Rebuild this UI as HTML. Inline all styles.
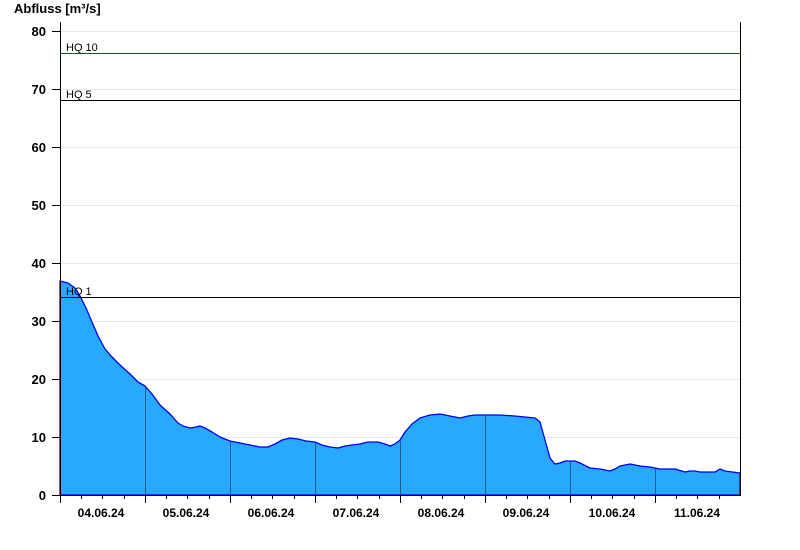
<!DOCTYPE html>
<html><head><meta charset="utf-8"><style>
html,body{margin:0;padding:0;background:#fff;width:800px;height:550px;overflow:hidden}
svg{display:block}
text{font-family:"Liberation Sans",Arial,sans-serif}
</style></head><body>
<svg width="800" height="550" viewBox="0 0 800 550" xmlns="http://www.w3.org/2000/svg">
<text x="14" y="13" font-size="13" font-weight="bold" fill="#000">Abfluss [m³/s]</text>
<g stroke="#e8e8e8" stroke-width="1">
<line x1="60" y1="31.5" x2="740" y2="31.5"/>
<line x1="60" y1="89.5" x2="740" y2="89.5"/>
<line x1="60" y1="147.5" x2="740" y2="147.5"/>
<line x1="60" y1="205.5" x2="740" y2="205.5"/>
<line x1="60" y1="263.5" x2="740" y2="263.5"/>
<line x1="60" y1="321.5" x2="740" y2="321.5"/>
<line x1="60" y1="379.5" x2="740" y2="379.5"/>
<line x1="60" y1="437.5" x2="740" y2="437.5"/>
</g>
<g font-size="13" font-weight="bold" text-anchor="end" fill="#000">
<text x="46" y="36">80</text><text x="46" y="94">70</text><text x="46" y="152">60</text>
<text x="46" y="210">50</text><text x="46" y="268">40</text><text x="46" y="326">30</text>
<text x="46" y="384">20</text><text x="46" y="442">10</text><text x="46" y="500">0</text>
</g>
<g stroke="#000"><line x1="52" y1="31.5" x2="60" y2="31.5"/><line x1="52" y1="89.5" x2="60" y2="89.5"/><line x1="52" y1="147.5" x2="60" y2="147.5"/><line x1="52" y1="205.5" x2="60" y2="205.5"/><line x1="52" y1="263.5" x2="60" y2="263.5"/><line x1="52" y1="321.5" x2="60" y2="321.5"/><line x1="52" y1="379.5" x2="60" y2="379.5"/><line x1="52" y1="437.5" x2="60" y2="437.5"/><line x1="52" y1="495.5" x2="60" y2="495.5"/></g>
<polygon fill="#29a8ff" stroke="#0000ee" stroke-width="1.3" stroke-linejoin="round" points="60,495 60,281 68,283 75,288 80,296 86,308 92,322 98,336 105,349 112,357 120,365 130,374 138,382 145,386 152,394 160,405 170,414 178,423 183,426 190,428 196,427 200,426 205,428 212,432 220,437 230,441 240,443 250,445 260,447 268,447 275,444 282,440 290,438 298,439 306,441 315,442 322,445 330,447 338,448 345,446 352,445 360,444 368,442 378,442 385,444 390,446 395,444 400,440 405,432 412,424 420,418 430,415 440,414 450,416 460,418 468,416 475,415 485,415 500,415 515,416 525,417 535,418 540,422 545,440 550,458 555,464 560,463 565,461 575,461 580,463 590,468 600,469 610,471 615,469 620,466 630,464 640,466 650,467 660,469 675,469 685,472 690,471 695,471 700,472 715,472 720,469 725,471 740,473 740,495"/>
<g stroke="#1a5a8a" stroke-width="1">
<line x1="145.5" y1="387" x2="145.5" y2="495"/>
<line x1="230.5" y1="442" x2="230.5" y2="495"/>
<line x1="315.5" y1="443" x2="315.5" y2="495"/>
<line x1="400.5" y1="441" x2="400.5" y2="495"/>
<line x1="485.5" y1="416" x2="485.5" y2="495"/>
<line x1="570.5" y1="462" x2="570.5" y2="495"/>
<line x1="655.5" y1="469" x2="655.5" y2="495"/>
</g>
<line x1="60" y1="53.5" x2="740" y2="53.5" stroke="#1a5a1a"/>
<line x1="60" y1="100.5" x2="740" y2="100.5" stroke="#000"/>
<line x1="60" y1="297.5" x2="740" y2="297.5" stroke="#000"/>
<g font-size="11" fill="#000"><text x="66" y="51">HQ 10</text><text x="66" y="98">HQ 5</text><text x="66" y="295">HQ 1</text></g>
<line x1="60.5" y1="22" x2="60.5" y2="495" stroke="#000"/>
<line x1="740.5" y1="22" x2="740.5" y2="495" stroke="#000"/>
<line x1="60" y1="495.5" x2="741" y2="495.5" stroke="#000"/>
<g stroke="#000">
<line x1="60.5" y1="495" x2="60.5" y2="503"/><line x1="145.5" y1="495" x2="145.5" y2="503"/><line x1="230.5" y1="495" x2="230.5" y2="503"/><line x1="315.5" y1="495" x2="315.5" y2="503"/><line x1="400.5" y1="495" x2="400.5" y2="503"/><line x1="485.5" y1="495" x2="485.5" y2="503"/><line x1="570.5" y1="495" x2="570.5" y2="503"/><line x1="655.5" y1="495" x2="655.5" y2="503"/>
<line x1="81.5" y1="495" x2="81.5" y2="499"/><line x1="102.5" y1="495" x2="102.5" y2="499"/><line x1="124.5" y1="495" x2="124.5" y2="499"/>
<line x1="166.5" y1="495" x2="166.5" y2="499"/><line x1="187.5" y1="495" x2="187.5" y2="499"/><line x1="209.5" y1="495" x2="209.5" y2="499"/>
<line x1="251.5" y1="495" x2="251.5" y2="499"/><line x1="272.5" y1="495" x2="272.5" y2="499"/><line x1="294.5" y1="495" x2="294.5" y2="499"/>
<line x1="336.5" y1="495" x2="336.5" y2="499"/><line x1="357.5" y1="495" x2="357.5" y2="499"/><line x1="379.5" y1="495" x2="379.5" y2="499"/>
<line x1="421.5" y1="495" x2="421.5" y2="499"/><line x1="442.5" y1="495" x2="442.5" y2="499"/><line x1="464.5" y1="495" x2="464.5" y2="499"/>
<line x1="506.5" y1="495" x2="506.5" y2="499"/><line x1="527.5" y1="495" x2="527.5" y2="499"/><line x1="549.5" y1="495" x2="549.5" y2="499"/>
<line x1="591.5" y1="495" x2="591.5" y2="499"/><line x1="612.5" y1="495" x2="612.5" y2="499"/><line x1="634.5" y1="495" x2="634.5" y2="499"/>
<line x1="676.5" y1="495" x2="676.5" y2="499"/><line x1="697.5" y1="495" x2="697.5" y2="499"/><line x1="719.5" y1="495" x2="719.5" y2="499"/>
</g>
<g font-size="12" font-weight="bold" text-anchor="middle" fill="#000">
<text x="101" y="517">04.06.24</text><text x="186" y="517">05.06.24</text><text x="271" y="517">06.06.24</text>
<text x="356" y="517">07.06.24</text><text x="441" y="517">08.06.24</text><text x="526" y="517">09.06.24</text>
<text x="612" y="517">10.06.24</text><text x="697" y="517">11.06.24</text>
</g>
</svg>
</body></html>
